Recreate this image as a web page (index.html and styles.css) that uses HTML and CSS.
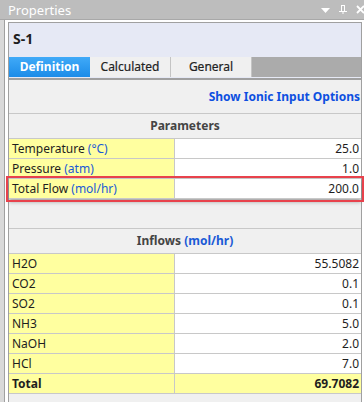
FILE: index.html
```html
<!DOCTYPE html>
<html>
<head>
    <meta charset="UTF-8" />
    <title>Properties</title>
    <link rel="stylesheet" href="styles.css">
</head>
<body>

<header class="titlebar">
  <span class="title">Properties</span>
  <span class="tools">
    <svg width="9" height="6" viewBox="0 0 9 6"><path d="M0 0h9L4.5 5z" fill="#fff"/></svg>
    <svg width="8" height="9" viewBox="0 0 8 9"><path d="M2 0.5h4M2.5 0v6M5.5 0v6M0 6.5h8M4 6v3" stroke="#fff" fill="none"/></svg>
    <svg width="9" height="9" viewBox="0 0 9 9"><path d="M1 1l7 7M8 1L1 8" stroke="#fff" stroke-width="1.8"/></svg>
  </span>
</header>

<div class="pane">
  <div class="inner">
    <div class="objhead">S-1</div>
    <div class="tabs">
      <div class="tab active">Definition</div>
      <div class="tab">Calculated</div>
      <div class="tab">General</div>
    </div>

    <div class="content">
      <div class="linkrow"><a class="link">Show Ionic Input Options</a></div>

      <div class="group">
        <div class="grouphead">Parameters</div>
        <div class="row"><div class="name">Temperature <span class="unit">(°C)</span></div><div class="val">25.0</div></div>
        <div class="row"><div class="name">Pressure <span class="unit">(atm)</span></div><div class="val">1.0</div></div>
        <div class="row highlight"><div class="name">Total Flow <span class="unit">(mol/hr)</span></div><div class="val">200.0</div></div>
      </div>

      <div class="group inflows">
        <div class="grouphead">Inflows <span class="unit">(mol/hr)</span></div>
        <div class="row"><div class="name">H2O</div><div class="val">55.5082</div></div>
        <div class="row"><div class="name">CO2</div><div class="val">0.1</div></div>
        <div class="row"><div class="name">SO2</div><div class="val">0.1</div></div>
        <div class="row"><div class="name">NH3</div><div class="val">5.0</div></div>
        <div class="row"><div class="name">NaOH</div><div class="val">2.0</div></div>
        <div class="row"><div class="name">HCl</div><div class="val">7.0</div></div>
        <div class="row total"><div class="name">Total</div><div class="val">69.7082</div></div>
      </div>
    </div>
  </div>
</div>

</body>
</html>
```

FILE: styles.css
```css
* {
  box-sizing: border-box;
}

body {
  margin: 0;
  padding-left: 4px;
  height: 402px;
  overflow: hidden;
  background: #d9d9d9;
  font-family: "Noto Sans", Arial, sans-serif;
  font-size: 12px;
  color: #1e1e1e;
}

/* Docked window title */
.titlebar {
  margin-left: -4px;
  height: 20px;
  background: #bdbdbd;
  border-bottom: 1px solid #a8a8a8;
  display: flex;
  align-items: center;
  justify-content: space-between;
  padding: 0 0 0 8px;
  color: #fff;
  font-size: 13px;
}

.tools {
  display: flex;
  align-items: center;
  gap: 9px;
  margin-right: -1px;
}

.tools svg:first-child {
  margin-top: 2px;
}

.pane {
  border-left: 1px solid #a0a0a0;
  background: #fff;
  padding: 2px 2px 0 3px;
  height: 382px;
}

.inner {
  border: 1px solid #a0a0a0;
  border-bottom: none;
  background: #f0f0f0;
  height: 100%;
}

/* Object name header */
.objhead {
  height: 34px;
  background: #e6e9f5;
  font-weight: bold;
  font-size: 14px;
  padding: 6px 0 0 4px;
}

/* Tab strip */
.tabs {
  display: flex;
  height: 23px;
  background: #ababab;
  border-bottom: 2px solid #a0a0a0;
  box-shadow: inset 0 -1px 0 #e6e9f5;
}

.tab {
  width: 81px;
  height: 20px;
  background: #f0f0f0;
  border-right: 1px solid #c4c4c4;
  text-align: center;
  line-height: 20px;
  color: #222;
  -webkit-text-stroke: 0.2px #222;
}

.tab.active {
  background: linear-gradient(#40aaf8, #1c8ce8);
  color: #fff;
  font-weight: bold;
  border-right: none;
  -webkit-text-stroke: 0;
}

.linkrow {
  height: 33px;
  text-align: right;
  padding: 8px 1px 0 0;
}

.link {
  color: #0d4fe0;
  font-weight: bold;
}

/* Property groups */
.group {
  border-top: 1px solid #c8c8c8;
}

.inflows {
  margin-top: 29px;
}

.grouphead {
  height: 25px;
  line-height: 24px;
  text-align: center;
  font-weight: bold;
  color: #444;
  border-bottom: 1px solid #c8c8c8;
}

.grouphead .unit {
  font-weight: bold;
}

.row {
  display: grid;
  grid-template-columns: 166px 1fr;
  height: 20px;
  border-bottom: 1px solid #c8c8c8;
}

.name {
  background: #ffff9f;
  border-right: 1px solid #c8c8c8;
  padding-left: 3px;
  line-height: 19px;
}

.val {
  background: #fff;
  text-align: right;
  padding-right: 2px;
  line-height: 19px;
}

.unit {
  color: #1a5ad6;
}

.highlight {
  outline: 2px solid #e8424c;
  outline-offset: 1px;
  box-shadow: 0 3px 4px rgba(0, 0, 0, 0.3);
  position: relative;
}

.total .name,
.total .val {
  background: #ffff9f;
  font-weight: bold;
}
```
